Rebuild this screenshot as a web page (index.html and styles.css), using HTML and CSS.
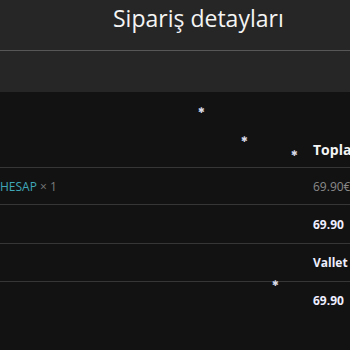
FILE: index.html
```html
<!DOCTYPE html>
<html lang="tr">
<head>
    <meta charset="UTF-8">
    <meta name="viewport" content="width=device-width, initial-scale=1.0">
    <title>Sipariş detayları</title>
    <link rel="stylesheet" href="styles.css">
</head>
<body>
    <header class="topbar">
        <h1 class="title">Sipariş detayları</h1>
    </header>
    <div class="subbar"></div>

    <table class="order">
        <thead>
            <tr class="head-row">
                <th class="col-name"></th>
                <th class="col-total">Topla</th>
            </tr>
        </thead>
        <tbody>
            <tr class="row-a">
                <td class="col-name"><span class="product">HESAP</span> <span class="qty">× 1</span></td>
                <td class="col-total price">69.90€</td>
            </tr>
            <tr class="row-b">
                <td class="col-name"></td>
                <td class="col-total strong">69.90</td>
            </tr>
            <tr class="row-c">
                <td class="col-name"></td>
                <td class="col-total strong">Vallet</td>
            </tr>
            <tr class="row-d">
                <td class="col-name"></td>
                <td class="col-total strong">69.90</td>
            </tr>
        </tbody>
    </table>

    <!-- snow effect -->
    <span class="flake" style="left: 198px; top: 105px;">✱</span>
    <span class="flake" style="left: 241px; top: 134px;">✱</span>
    <span class="flake" style="left: 291px; top: 148px;">✱</span>
    <span class="flake" style="left: 272px; top: 278px;">✱</span>
</body>
</html>
```

FILE: styles.css
```css
body {
    margin: 0;
    background-color: #121212;
    font-family: 'Open Sans', 'Noto Sans', sans-serif;
    color: #f2f2f2;
    overflow: hidden;
}
.topbar {
    height: 51px;
    background-color: #262626;
    border-bottom: 1px solid #575757;
    box-sizing: border-box;
}
.title {
    margin: 0;
    padding: 1px 0 0 113px;
    font-size: 23px;
    font-weight: 500;
    line-height: 34px;
    color: #f4f4f4;
}
.subbar {
    height: 41px;
    background-color: #262626;
}
.order {
    border-collapse: collapse;
    table-layout: fixed;
    width: 350px;
}
.order td,
.order th {
    border-bottom: 1px solid #363636;
    padding: 0;
    text-align: left;
    white-space: nowrap;
}
.col-name {
    width: 313px;
}
.col-total {
    width: 37px;
}
.head-row th {
    height: 67px;
    vertical-align: bottom;
    padding-bottom: 8px;
    font-size: 14px;
    font-weight: 700;
    color: #f4f4f4;
}
.order tbody td {
    font-size: 12px;
}
.row-a td {
    height: 36px;
}
.row-b td {
    height: 38px;
}
.row-c td {
    height: 37px;
}
.row-d td {
    height: 37px;
    border-bottom: none;
}
.product {
    color: #3fa7b8;
}
.qty {
    color: #7a7a7a;
}
.price {
    color: #8a8a8a;
}
.strong {
    font-size: 13px;
    font-weight: 700;
    color: #eeeeff;
}
.flake {
    position: absolute;
    font-size: 8px;
    line-height: 10px;
    color: #d8d8e6;
}
```
